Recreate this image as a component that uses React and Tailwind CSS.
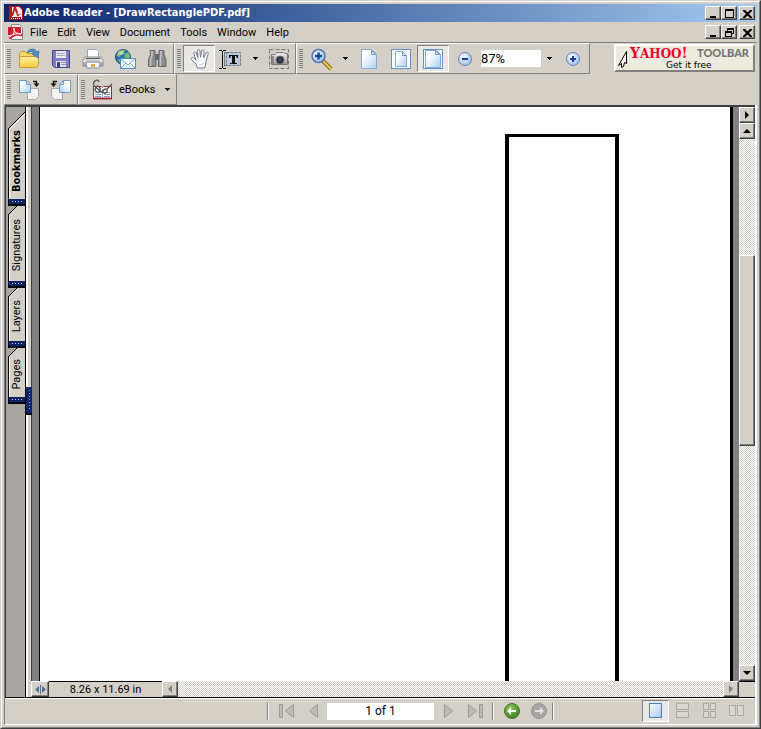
const MENUS = ["File", "Edit", "View", "Document", "Tools", "Window", "Help"];

const PANELS = [
  { name: "Bookmarks", height: "h-[94px]", active: true },
  { name: "Signatures", height: "h-[82px]" },
  { name: "Layers", height: "h-[60px]" },
  { name: "Pages", height: "h-[56px]" },
];

const RAISED =
  "border border-t-white border-l-white border-r-[#404040] border-b-[#404040] shadow-[inset_-1px_-1px_0_#808080] bg-[#d4d0c8]";
const SUNKEN = "border border-t-[#808080] border-l-[#808080] border-r-white border-b-white bg-[#e9e8e4]";
const TRACK = "bg-[repeating-conic-gradient(#ffffff_0_25%,#d4d0c8_0_50%)] bg-[length:2px_2px]";

function Svg({ w = 24, h = 24, children }) {
  return (
    <svg width={w} height={h} viewBox={`0 0 ${w} ${h}`} className="shrink-0" aria-hidden="true">
      {children}
    </svg>
  );
}

function Gradients() {
  return (
    <svg width="0" height="0" className="absolute" aria-hidden="true">
      <defs>
        <linearGradient id="paper" x1="0" y1="0" x2="1" y2="1">
          <stop offset="0.3" stopColor="#fff" />
          <stop offset="1" stopColor="#a9cdf0" />
        </linearGradient>
        <linearGradient id="blue" x1="0" y1="0" x2="1" y2="1">
          <stop offset="0" stopColor="#fff" />
          <stop offset="1" stopColor="#a3c8f0" />
        </linearGradient>
        <linearGradient id="folder" x1="0" y1="0" x2="0" y2="1">
          <stop offset="0" stopColor="#fff3a6" />
          <stop offset="1" stopColor="#f3c83c" />
        </linearGradient>
        <linearGradient id="metal" x1="0" y1="0" x2="0" y2="1">
          <stop offset="0" stopColor="#f0f0f0" />
          <stop offset="1" stopColor="#9a9a9a" />
        </linearGradient>
        <radialGradient id="lens" cx="0.4" cy="0.35" r="0.7">
          <stop offset="0" stopColor="#fff" />
          <stop offset="1" stopColor="#8db9ea" />
        </radialGradient>
        <radialGradient id="green" cx="0.4" cy="0.3" r="0.8">
          <stop offset="0" stopColor="#8fc35d" />
          <stop offset="1" stopColor="#33781a" />
        </radialGradient>
      </defs>
    </svg>
  );
}

const OpenIcon = () => (
  <Svg>
    <path d="M2.500 20V6.500l2-2h4l2 2h7V12z" fill="#f5d968" stroke="#c5982b" />
    <path d="M2.500 20.500V11l2-1.500h17v9l-2 2z" fill="url(#folder)" stroke="#c89b2c" />
    <path
      d="M10 6c2-5 8-5 10-1l2-1-1 7-6-4 2-1c-2-2-4-2-7 0z"
      fill="#5390ca"
      stroke="#2f679e"
      strokeWidth="0.7"
    />
  </Svg>
);

const SaveIcon = () => (
  <Svg>
    <path d="M3.500 3.500h17v17h-15l-2-2z" fill="#7f7cc9" stroke="#474383" />
    <path d="M7 4h10v7H7z" fill="#e8e9f2" />
    <path d="M8 6.500h8M8 8.500h8" stroke="#aaaac4" />
    <path d="M7 14h10v6H7z" fill="#e4e5ee" />
    <path d="M8 15h3v5H8z" fill="#3f3b78" />
    <path d="M12 15.500h5M12 17.500h5" stroke="#8f8fae" />
  </Svg>
);

const PrintIcon = () => (
  <Svg>
    <path d="M6.500 11V2.500h9l2 2V11z" fill="#fff" stroke="#8ba9c9" />
    <path d="M4 10h16l2 3v6H2v-6z" fill="url(#metal)" stroke="#8a8a8a" />
    <path d="M5 11.500h14" stroke="#555" />
    <path d="m5 17 1-2h12l1 2-1 4H6z" fill="#f1f5fb" stroke="#7f93aa" />
    <path d="M10 17h4v3h-4z" fill="#e4a92f" />
    <path d="M2 14h3M19 14h3" stroke="#fff" />
  </Svg>
);

const GlobeMailIcon = () => (
  <Svg>
    <circle cx="10" cy="10" r="7.500" fill="#2e73b8" stroke="#1f4c86" />
    <path d="M4 7c2-4 5-5 8-4l-1 3-3 1-1 3-3-1zM12 7l4-2 1 5-3 2-3-2zM5 12l4 1v4l-3-2z" fill="#7cbb63" />
    <ellipse cx="8" cy="6" rx="3" ry="2" fill="#fff" opacity="0.45" />
    <path d="M7.500 11.500h15v10h-15z" fill="#f6f9ff" stroke="#4a8dcb" />
    <path d="m8 12 7 6 7-6M8 21l5-5M22 21l-5-5" fill="none" stroke="#6fa5d8" />
  </Svg>
);

const BinocularsIcon = () => (
  <Svg>
    <path
      d="M5 3.500h5v4l1 2v10H3.500v-7l2-5zM14 3.500h5v4l2 5v7h-7.500V9.500l.5-2z"
      fill="#8d8d8d"
      stroke="#666"
    />
    <path d="M10 7h4v6h-4z" fill="#666" />
    <path d="M7 4v4l-1.500 5v6M16 4v4l-.5 3v8" fill="none" stroke="#c6c6c6" strokeWidth="1.500" />
  </Svg>
);

const HandIcon = () => (
  <Svg>
    <g transform="translate(2 0)">
      <path
        d="M8.500 21 7 17l-4.500-4.500c-1-1.300.6-2.600 2-1.600L7 13 4.800 6.500c-.5-1.700 1.700-2.300 2.300-.7L9 10.500 8.500 3.700c0-1.600 2.200-1.700 2.400 0l.6 6.500 1.300-6.400c.3-1.600 2.400-1.200 2.200.4L14.500 11l2.700-5.200c.8-1.400 2.600-.5 2 1L17 14l-.5 4-1 3z"
        fill="#fafbff"
        stroke="#747985"
      />
      <path d="M9 17c2 1 4 1 6-1" fill="none" stroke="#c7cbd8" />
    </g>
  </Svg>
);

const TextSelectIcon = () => (
  <Svg w={28}>
    <path d="M5.500 4v17M2 3.500h3M6 3.500h3M2 21.500h3M6 21.500h3" stroke="#111" />
    <path d="M7.500 5.500h4M7.500 5v14M7 18.500h4" stroke="#6c7783" />
    <rect x="9.500" y="5.500" width="14" height="13" fill="#b6c8d9" stroke="#6c7783" strokeDasharray="3 1" />
    <path d="M12 8h9v3h-1l-1-2h-1v7h2v1h-7v-1h2V9h-1l-1 2h-1z" fill="#111" />
  </Svg>
);

const CameraIcon = () => (
  <Svg>
    <rect x="2.500" y="2.500" width="19" height="19" fill="none" stroke="#777" strokeDasharray="4 2" />
    <path d="M4.500 7.500h4l1-2h7l1 1h3v11h-16z" fill="url(#metal)" stroke="#777" />
    <path d="M9 6h7v3H9z" fill="#e4e4e4" />
    <circle cx="13" cy="13" r="4" fill="#262626" stroke="#777" />
    <circle cx="13" cy="13" r="2" fill="#3f4c67" />
    <path d="M6 9v8" stroke="#888" strokeWidth="2" />
  </Svg>
);

const ZoomIcon = () => (
  <Svg>
    <path d="m14 14 8 8" stroke="#8a671c" strokeWidth="4" />
    <path d="m14 14 8 8" stroke="#f1c84d" strokeWidth="2" />
    <circle cx="9.500" cy="9" r="6.500" fill="url(#lens)" stroke="#5b72b7" strokeWidth="1.500" />
    <path d="M9.500 5.500v7M6 9h7" stroke="#174a9b" strokeWidth="2.500" />
  </Svg>
);

const PageIcon = ({ framed, wide }) => (
  <Svg>
    {framed && <rect x="2.500" y="2.500" width="19" height="19" fill="#fff" stroke="#5e91c5" />}
    <path
      d={wide ? "M4.500 3.500h11l4 4v13h-15z" : framed ? "M6.500 4.500h7l4 4v11h-11z" : "M4.500 2.500h10l5 5v14h-15z"}
      fill="url(#paper)"
      stroke="#7fa9d6"
    />
    <path d={framed && !wide ? "M13.500 4.500v4h4z" : "M14.500 3.500v4h4z"} fill="#dcecff" stroke="#6e9bcb" />
  </Svg>
);

const RoundIcon = ({ plus }) => (
  <Svg w={16} h={16}>
    <circle cx="8" cy="8" r="6.500" fill="url(#lens)" stroke="#6a84b6" />
    <path d={plus ? "M8 5v6M5 8h6" : "M5 8h6"} stroke="#183f91" strokeWidth="2" />
  </Svg>
);

const RotateIcon = ({ left }) => (
  <Svg>
    <g transform={left ? "translate(24 0) scale(-1 1)" : undefined}>
      <path d="M10.500 10.500h11v8l-3 3h-8z" fill="#f4f4f4" stroke="#a8a8a8" />
      <path d="M2.500 2.500h7l4 4v8h-11z" fill="url(#paper)" stroke="#6d9bd0" />
      <path d="M9.500 2.500v4h4z" fill="#dcecff" stroke="#6d9bd0" />
      <path d="M16 3.500h3.500V6" fill="none" stroke="#111" strokeWidth="1.500" />
      <path d="M16.500 5.500h6l-3 3.500z" fill="#111" />
    </g>
  </Svg>
);

const EbookIcon = () => (
  <Svg>
    <path d="M2.500 8.500h8l1 1 1-1h8v12h-18z" fill="#fff" stroke="#a52435" />
    <path d="M2 20.500h19" stroke="#a52435" strokeWidth="2" />
    <path d="M11.500 11v9M4 14.500h6M4 16.500h6M4 18.500h6M13 14.500h6M13 16.500h6M13 18.500h6" stroke="#7d9dcb" />
    <path
      d="M3 8c-2-5 4-8 5-4M3 8l9 7M7 8c-3 0-4 5-1 6s5-4 1-6M15 11c-3 0-4 3-2 4s5-3 2-4M16 11l5-5"
      fill="none"
      stroke="#4f4f4f"
      strokeWidth="1.300"
    />
  </Svg>
);

const AdobeIcon = ({ page }) => (
  <Svg w={16} h={16}>
    {page ? (
      <>
        <path d="M3.500.5h8l3 3v12h-11z" fill="#f7f7f7" stroke="#888" />
        <path d="M0 3h13v8H0z" fill="#d41f2c" />
        <path d="M1 14c5-3 6-7 5-10-2 1 1 7 8 7-4-2-9 0-12 3" fill="none" stroke="#d41f2c" strokeWidth="2.500" />
        <path d="M1 13c5-2 6-6 5-9-2 1 1 6 7 6-4-1-8 0-11 2" fill="none" stroke="#fff" />
      </>
    ) : (
      <>
        <path d="M1 1h11l3 3v11H1z" fill="#b5161f" />
        <path d="M4 2h7l3 3v9H4z" fill="#f4f0f0" />
        <path d="m3 11 3-9h2l3 9H9L7 5l-2 6zM7 8l4 2h3" fill="#c41822" />
        <path d="M2 12h11v3H2z" fill="#8d1219" />
        <path d="M3 13.500h9" stroke="#fff" strokeDasharray="1 1" />
      </>
    )}
  </Svg>
);

function Caret() {
  return (
    <svg width="5" height="3" viewBox="0 0 5 3" shapeRendering="crispEdges" aria-hidden="true">
      <path d="M0 0h5v1H4v1H3v1H2V2H1V1H0z" />
    </svg>
  );
}

function Arrow({ dir, dim }) {
  const shapes = {
    up: "M4 2 8 6H0z",
    down: "M0 2h8L4 6z",
    left: "M6 0v8L2 4z",
    right: "M2 0l4 4-4 4z",
  };
  return (
    <svg width="8" height="8" viewBox="0 0 8 8" aria-hidden="true">
      <path d={shapes[dir]} fill={dim ? "#808080" : "#000"} />
    </svg>
  );
}

function CaptionButton({ kind, className = "" }) {
  const paths = {
    Minimize: "M2 8h6v2H2z",
    Maximize: "M1 1h9v9H1zM2 3v6h7V3z",
    Restore: "M3 1h7v6H8v3H1V4h2zM4 3v1h4v2h1V3zM2 6v3h5V6z",
    Close: "M1 2h2l2 2h1l2-2h2v1L7 6l3 3v1H8L6 8H5l-2 2H1V9l3-3-3-3z",
  };
  return (
    <button aria-label={kind} className={`flex h-3.5 w-4 items-center justify-center ${RAISED} ${className}`}>
      <svg width="11" height="11" viewBox="0 0 11 11" className="shrink-0" aria-hidden="true">
        <path d={paths[kind]} fillRule="evenodd" />
      </svg>
    </button>
  );
}

function CaptionButtons({ middle }) {
  return (
    <div className="flex">
      <CaptionButton kind="Minimize" />
      <CaptionButton kind={middle} />
      <CaptionButton kind="Close" className="ml-0.5" />
    </div>
  );
}

function ToolGroup({ children }) {
  return (
    <div className="flex h-[31px] items-center border border-t-white border-r-[#808080] border-b-[#808080] border-l-white">
      <span className="mx-0.5 h-5 w-1 bg-[repeating-linear-gradient(#808080_0_1px,#d4d0c8_1px_2px)]" />
      {children}
    </div>
  );
}

function Tool({ label, active, narrow, children }) {
  return (
    <button
      aria-label={label}
      className={`flex h-[27px] shrink-0 items-center justify-center ${narrow ? "w-4" : "w-8"} ${active ? SUNKEN : ""}`}
    >
      {children}
    </button>
  );
}

function PanelTab({ name, height, active }) {
  return (
    <button
      className={`flex w-[17px] flex-col ${height} ${
        active ? "font-['DejaVu_Sans_Condensed','DejaVu_Sans',sans-serif] font-bold" : ""
      }`}
    >
      {active ? (
        <Svg w={17} h={17}>
          <path d="M17 0v17H0z" fill="#d4d0c8" />
          <path d="M17 0 0 17" stroke="#000" />
          <path d="M17 2 2 17" stroke="#fff" />
        </Svg>
      ) : (
        <Svg w={17} h={9}>
          <path d="M9 0h8v9H0z" fill="#d4d0c8" />
          <path d="M9 0 0 9" stroke="#000" />
        </Svg>
      )}
      <span className="flex w-full flex-1 items-center justify-center border-l border-black bg-[#d4d0c8] pb-1.5 shadow-[inset_1px_0_0_#fff]">
        <span className="rotate-180 [writing-mode:vertical-rl]">{name}</span>
      </span>
      <span className="flex h-[7px] w-full shrink-0 items-center justify-center border-b-2 border-l border-black bg-[#0a246a]">
        <span className="h-px w-2.5 bg-[repeating-linear-gradient(90deg,#d4d0c8_0_1px,transparent_1px_3px)]" />
      </span>
    </button>
  );
}

function NavButton({ label, d }) {
  return (
    <button aria-label={label} className="flex w-[27px] justify-center">
      <Svg w={18} h={18}>
        <path d={d} fill="#bdbbb6" stroke="#9b9994" />
      </Svg>
    </button>
  );
}

function Separator() {
  return <span className="h-[17px] w-0.5 border-l border-[#808080] bg-white" />;
}

function TitleBar() {
  return (
    <div className="flex h-[18px] shrink-0 items-center bg-linear-to-r from-[#0a246a] to-[#a6caf0] pr-0.5 pl-1">
      <AdobeIcon />
      <h1 className="flex-1 truncate font-['DejaVu_Sans_Condensed','DejaVu_Sans',sans-serif] text-[11px] leading-[18px] font-bold text-white">
        Adobe Reader - [DrawRectanglePDF.pdf]
      </h1>
      <CaptionButtons middle="Maximize" />
    </div>
  );
}

function MenuBar() {
  return (
    <div className="flex h-5 shrink-0 items-center pr-0.5 pl-1">
      <AdobeIcon page />
      <nav className="flex flex-1 pt-px pl-0.5">
        {MENUS.map((menu) => (
          <button key={menu} className="px-[5px] first:pl-1">
            {menu}
          </button>
        ))}
      </nav>
      <CaptionButtons middle="Restore" />
    </div>
  );
}

function YahooToolbar() {
  return (
    <a
      href="#yahoo"
      className="mt-px mr-0.5 ml-auto flex h-7 w-[141px] shrink-0 items-end border-2 border-t-white border-r-[#808080] border-b-[#808080] border-l-white bg-[#ecebdd] pl-0.5"
    >
      <Svg w={10} h={20}>
        <path d="M8.500 1.500v12l-2-1-1 4-2 1v-4l-3 2z" fill="#fff" stroke="#000" />
      </Svg>
      <span className="flex h-6 flex-1 flex-col pr-1 pl-0.5">
        <span className="flex h-3.5 items-center justify-between">
          <span className="font-['DejaVu_Serif',serif] text-[12px] leading-[12px] font-bold text-[#f0002e]">
            <span className="text-[14px]">Y</span>AHOO<span className="text-[14px]">!</span>
          </span>
          <span className="font-['Lato',sans-serif] text-[11px] leading-[14px] font-black text-[#747474]">TOOLBAR</span>
        </span>
        <span className="pl-9 font-['DejaVu_Sans',sans-serif] text-[9px] leading-[10px]">Get it free</span>
      </span>
    </a>
  );
}

function Toolbars() {
  return (
    <div className="shrink-0 border-t border-[#808080]">
      <div className="flex">
        <ToolGroup>
          <Tool label="Open"><OpenIcon /></Tool>
          <Tool label="Save"><SaveIcon /></Tool>
          <Tool label="Print"><PrintIcon /></Tool>
          <Tool label="Email"><GlobeMailIcon /></Tool>
          <Tool label="Search"><BinocularsIcon /></Tool>
        </ToolGroup>
        <ToolGroup>
          <Tool label="Hand tool" active><HandIcon /></Tool>
          <Tool label="Select text"><TextSelectIcon /></Tool>
          <Tool label="Selection tools" narrow><Caret /></Tool>
          <Tool label="Snapshot"><CameraIcon /></Tool>
        </ToolGroup>
        <ToolGroup>
          <Tool label="Zoom in tool"><ZoomIcon /></Tool>
          <Tool label="Zoom tools" narrow><Caret /></Tool>
          <Tool label="Actual size"><PageIcon /></Tool>
          <Tool label="Fit page"><PageIcon framed /></Tool>
          <Tool label="Fit width" active><PageIcon framed wide /></Tool>
          <Tool label="Zoom out"><RoundIcon /></Tool>
          <input
            aria-label="Zoom"
            defaultValue="87%"
            className="h-[17px] w-[60px] bg-white font-['Roboto',sans-serif] text-[13px]"
          />
          <Tool label="Zoom levels" narrow><Caret /></Tool>
          <Tool label="Zoom in"><RoundIcon plus /></Tool>
        </ToolGroup>
        <YahooToolbar />
      </div>
      <div className="flex">
        <ToolGroup>
          <Tool label="Rotate clockwise"><RotateIcon /></Tool>
          <Tool label="Rotate counterclockwise"><RotateIcon left /></Tool>
        </ToolGroup>
        <ToolGroup>
          <button className="flex h-[27px] items-center gap-1 pr-1 pl-1">
            <EbookIcon />
            eBooks
          </button>
          <Tool label="eBooks menu" narrow><Caret /></Tool>
        </ToolGroup>
      </div>
    </div>
  );
}

function PanelRail() {
  return (
    <aside className="flex shrink-0 border-l border-[#404040] bg-[#a7a6a1]">
      <div className="flex flex-col border-r border-black pt-[5px] pl-0.5">
        {PANELS.map((panel) => (
          <PanelTab key={panel.name} {...panel} />
        ))}
      </div>
      <div className="relative w-[5px] border-l-2 border-white bg-[#d4d0c8]">
        <button
          aria-label="Resize panel"
          className="absolute top-[280px] -left-0.5 flex h-7 w-1.5 items-center justify-center border-b-2 border-black bg-[#0a246a]"
        >
          <span className="h-5 w-px bg-[repeating-linear-gradient(#8fa3d0_0_1px,transparent_1px_3px)]" />
        </button>
      </div>
    </aside>
  );
}

function DocumentView() {
  return (
    <main className="flex min-w-0 flex-1 flex-col">
      <div className="flex min-h-0 flex-1 border-l border-[#404040]">
        <div className="flex flex-1 border-r-6 border-l-7 border-[#808080]">
          <div className="flex flex-1 justify-end overflow-hidden border-r-3 border-l border-black bg-white pt-[27px] pr-[111px]">
            <div className="w-[114px] border-4 border-t-3 border-b-0 border-black" />
          </div>
        </div>
        <div className={`flex w-4 flex-col ${TRACK}`}>
          <button aria-label="Show panel" className={`flex h-4 items-center justify-center ${RAISED}`}>
            <Arrow dir="right" />
          </button>
          <button aria-label="Scroll up" className={`flex h-4 items-center justify-center ${RAISED}`}>
            <Arrow dir="up" />
          </button>
          <div className="flex flex-1 flex-col">
            <div className="flex-[116]" />
            <div className={`flex-[190] ${RAISED}`} />
            <div className="flex-[220]" />
          </div>
          <button aria-label="Scroll down" className={`flex h-4 items-center justify-center ${RAISED}`}>
            <Arrow dir="down" />
          </button>
        </div>
      </div>
      <div className="flex h-4 shrink-0">
        <button aria-label="Split view" className={`flex w-[18px] items-center justify-center ${RAISED}`}>
          <svg width="11" height="9" viewBox="0 0 11 9" aria-hidden="true">
            <path d="M0 4.500 4 1v7zM11 4.500 7 1v7zM5 0h1v9H5z" fill="#52739c" />
          </svg>
        </button>
        <div className="flex w-[113px] items-center justify-center border-t border-black">8.26 x 11.69 in</div>
        <button aria-label="Scroll left" className={`flex w-4 items-center justify-center ${RAISED}`}>
          <Arrow dir="left" dim />
        </button>
        <div className={`flex-1 ${TRACK}`} />
        <button aria-label="Scroll right" className={`flex w-4 items-center justify-center ${RAISED}`}>
          <Arrow dir="right" dim />
        </button>
        <div className="w-4 border-t border-black" />
      </div>
    </main>
  );
}

function HistoryIcon({ back }) {
  return (
    <Svg w={18} h={18}>
      <circle cx="9" cy="9" r="7.500" fill={back ? "url(#green)" : "#a7a6a3"} stroke={back ? "#3b7423" : "#92918e"} />
      <path
        d={back ? "M4 9l4-4v3h5v2H8v3z" : "M14 9l-4-4v3H5v2h5v3z"}
        fill={back ? "#fff" : "#e5e3df"}
      />
    </Svg>
  );
}

function LayoutIcon({ rects }) {
  return (
    <Svg w={18} h={18}>
      {rects.map(([x, y, w, h]) => (
        <rect key={`${x}-${y}`} x={x} y={y} width={w} height={h} fill="#d9d7d2" stroke="#aaa8a4" />
      ))}
    </Svg>
  );
}

function StatusBar() {
  return (
    <footer className="flex h-[26px] shrink-0 items-center border-t border-white pr-[5px] pb-px">
      <div className="w-[174px]" />
      <div className="flex flex-1 items-center justify-center">
        <Separator />
        <span className="w-1" />
        <NavButton label="First page" d="M1.500 2.500h3v13h-3zM15.500 2.500v13L7.500 9z" />
        <NavButton label="Previous page" d="M12.500 2.500v13L4.500 9z" />
        <input
          aria-label="Page"
          defaultValue="1 of 1"
          className="h-[17px] w-[107px] bg-white text-center font-['Roboto',sans-serif] text-[12px]"
        />
        <NavButton label="Next page" d="M5.500 2.500v13l8-6.500z" />
        <NavButton label="Last page" d="M2.500 2.500v13l8-6.500zM13.500 2.500h3v13h-3z" />
        <span className="w-1" />
        <Separator />
        <button aria-label="Previous view" className="ml-1 flex w-[27px] justify-center"><HistoryIcon back /></button>
        <button aria-label="Next view" className="flex w-[27px] justify-center"><HistoryIcon /></button>
        <Separator />
      </div>
      <div className="flex">
        <button aria-label="Single page" className={`flex h-[22px] w-[27px] items-center justify-center ${SUNKEN}`}>
          <Svg w={14} h={16}>
            <rect x="0.500" y="0.500" width="12" height="14" fill="url(#blue)" stroke="#4b7dbb" />
          </Svg>
        </button>
        <button aria-label="Continuous" className="flex w-[27px] items-center justify-center">
          <LayoutIcon rects={[[2.5, 1.5, 12, 6], [2.5, 9.5, 12, 6]]} />
        </button>
        <button aria-label="Continuous facing" className="flex w-[27px] items-center justify-center">
          <LayoutIcon rects={[[2.5, 1.5, 5, 6], [9.5, 1.5, 5, 6], [2.5, 9.5, 5, 6], [9.5, 9.5, 5, 6]]} />
        </button>
        <button aria-label="Facing" className="flex w-[27px] items-center justify-center">
          <LayoutIcon rects={[[1.5, 3.5, 6, 10], [9.5, 3.5, 6, 10]]} />
        </button>
      </div>
    </footer>
  );
}

export default function App() {
  return (
    <div className="h-screen border border-t-[#d4d0c8] border-r-[#404040] border-b-[#404040] border-l-[#d4d0c8] bg-[#d4d0c8] font-['Roboto',sans-serif] text-[11px] leading-4 text-black">
      <Gradients />
      <div className="flex h-full flex-col border border-t-white border-r-[#808080] border-b-[#808080] border-l-white p-0.5">
        <TitleBar />
        <MenuBar />
        <Toolbars />
        <div className="flex min-h-0 flex-1 flex-col border-r-2 border-b border-l border-r-white border-b-white border-l-[#808080]">
          <div className="flex min-h-0 flex-1 border-t-2 border-b border-t-[#404040] border-b-black">
            <PanelRail />
            <DocumentView />
          </div>
          <StatusBar />
        </div>
      </div>
    </div>
  );
}
